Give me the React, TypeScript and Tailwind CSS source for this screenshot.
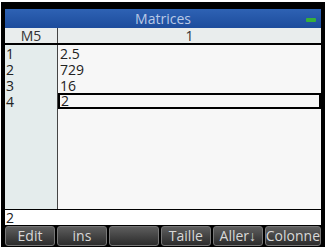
const rows = ['2.5', '729', '16', '2']
const menu = ['Edit', 'ins', '', 'Taille', 'Aller↓', 'Colonne']

export default function App() {
  return (
    <div className="w-[326px] h-[248px] bg-white pt-[2px] pl-[1px] font-['Open_Sans',sans-serif]">
      <div className="w-[324px] h-[245px] bg-black pt-[7px] px-[4px] pb-[1px] flex flex-col">
        {/* titre */}
        <div className="relative h-[19px] bg-gradient-to-b from-[#2e62b4] to-[#1d4c9c] flex items-center justify-center">
          <span className="text-[14px] leading-none text-[#b9c9e6]">Matrices</span>
          <div className="absolute right-[5px] top-[9px] w-[10px] h-[4px] bg-[#37b03a] rounded-[1px]" />
        </div>

        {/* en-tête des colonnes */}
        <div className="flex h-[17px] bg-[#e9eded] border-b-2 border-black text-[14px] leading-none text-[#333]">
          <div className="w-[53px] border-r border-[#444] flex items-center justify-center">M5</div>
          <div className="flex-1 flex items-center justify-center">1</div>
        </div>

        {/* données */}
        <div className="flex-1 flex bg-[#f7f7f7]">
          <div className="w-[53px] bg-[#e4ecec] border-r border-[#444] pt-[1px]">
            {rows.map((_, i) => (
              <div key={i} className="h-[16px] pl-[1px] text-[14px] leading-[16px] text-[#222]">
                {i + 1}
              </div>
            ))}
          </div>
          <div className="flex-1 pt-[1px]">
            {rows.map((v, i) => (
              <div
                key={i}
                className={
                  i === 3
                    ? 'h-[16px] -mt-[1px] border-2 border-black pl-[1px] text-[14px] leading-[12px] text-[#222]'
                    : 'h-[16px] pl-[2px] text-[14px] leading-[16px] text-[#222]'
                }
              >
                {v}
              </div>
            ))}
          </div>
        </div>

        {/* ligne d'édition */}
        <div className="h-[16px] bg-white border-t border-black text-[14px] leading-[15px] text-[#222] pl-[1px]">2</div>

        {/* menu */}
        <div className="flex gap-[2px] pt-[1px] h-[21px]">
          {menu.map((m, i) => (
            <div
              key={i}
              className="flex-1 rounded-[3px] border border-[#777] bg-gradient-to-b from-[#5e5e5e] to-[#2c2c2c] flex items-center justify-center text-[14px] leading-none text-[#d8d8d8]"
            >
              {m}
            </div>
          ))}
        </div>
      </div>
    </div>
  )
}
